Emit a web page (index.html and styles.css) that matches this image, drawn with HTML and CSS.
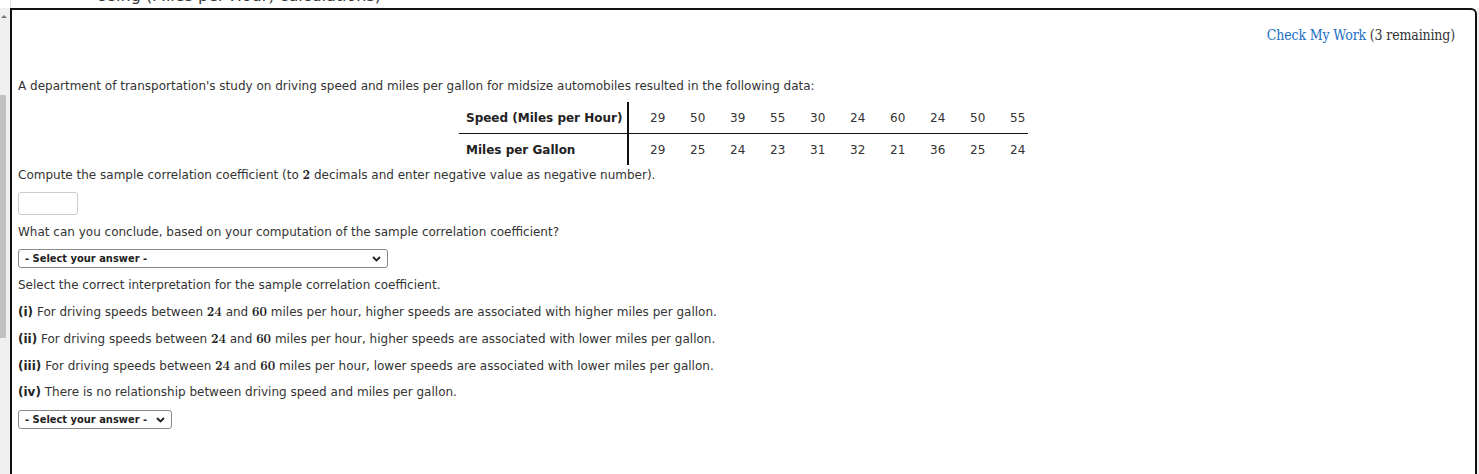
FILE: index.html
```html
<!DOCTYPE html>
<html>
<head>
<meta charset="utf-8">
<link rel="stylesheet" href="styles.css">
</head>
<body>
<div class="topstrip"><span class="cut">Using (Miles per Hour) calculations)</span></div>
<div class="frame">
  <div class="side">
    <div class="arrow"></div>
    <div class="thumb"></div>
  </div>
  <div class="panel">
    <div class="check"><a class="link">Check My Work</a> (3 remaining)</div>
    <p class="intro">A department of transportation's study on driving speed and miles per gallon for midsize automobiles resulted in the following data:</p>
    <div class="tablewrap">
      <table class="data">
        <tr class="r1">
          <th>Speed (Miles per Hour)</th>
          <td>29</td><td>50</td><td>39</td><td>55</td><td>30</td><td>24</td><td>60</td><td>24</td><td>50</td><td>55</td>
        </tr>
        <tr class="r2">
          <th>Miles per Gallon</th>
          <td>29</td><td>25</td><td>24</td><td>23</td><td>31</td><td>32</td><td>21</td><td>36</td><td>25</td><td>24</td>
        </tr>
      </table>
    </div>
    <p class="q q1">Compute the sample correlation coefficient (to <span class="m">2</span> decimals and enter negative value as negative number).</p>
    <div class="inp"></div>
    <p class="q q2">What can you conclude, based on your computation of the sample correlation coefficient?</p>
    <div class="sel wide"><span>- Select your answer -</span><svg class="chev" width="9" height="6" viewBox="0 0 9 6"><path d="M1 1 L4.5 4.5 L8 1" fill="none" stroke="#222" stroke-width="1.8"/></svg></div>
    <p class="q q3">Select the correct interpretation for the sample correlation coefficient.</p>
    <p class="opt o1"><b>(i)</b> For driving speeds between <span class="m">24</span> and <span class="m">60</span> miles per hour, higher speeds are associated with higher miles per gallon.</p>
    <p class="opt"><b>(ii)</b> For driving speeds between <span class="m">24</span> and <span class="m">60</span> miles per hour, higher speeds are associated with lower miles per gallon.</p>
    <p class="opt"><b>(iii)</b> For driving speeds between <span class="m">24</span> and <span class="m">60</span> miles per hour, lower speeds are associated with lower miles per gallon.</p>
    <p class="opt"><b>(iv)</b> There is no relationship between driving speed and miles per gallon.</p>
    <div class="sel narrow"><span>- Select your answer -</span><svg class="chev" width="9" height="6" viewBox="0 0 9 6"><path d="M1 1 L4.5 4.5 L8 1" fill="none" stroke="#222" stroke-width="1.8"/></svg></div>
  </div>
  <div class="rside"></div>
</div>
</body>
</html>
```

FILE: styles.css
```css
html, body {
  margin: 0;
  padding: 0;
  background: #fff;
  height: 474px;
  overflow: hidden;
}
body {
  font-family: "DejaVu Sans", Verdana, sans-serif;
  font-size: 12px;
  color: #333;
}
.topstrip {
  height: 8px;
  overflow: hidden;
  position: relative;
  margin-left: 10px;
  border-left: 1px solid #e0e0e0;
}
.cut {
  position: absolute;
  left: 85px;
  top: -14px;
  font-size: 16px;
  white-space: nowrap;
  color: #333;
}
.frame {
  display: flex;
  height: 466px;
}
.side {
  width: 10px;
  background: #f0f0f0;
  display: flex;
  flex-direction: column;
  align-items: flex-start;
}
.arrow {
  width: 0;
  height: 0;
  margin: 7px 0 0 1px;
  border-left: 3px solid transparent;
  border-right: 3px solid transparent;
  border-bottom: 3px solid #777;
}
.thumb {
  margin-top: 77px;
  width: 6px;
  height: 243px;
  background: #c1c1c1;
}
.panel {
  flex: 1;
  border: 2px solid #111;
  border-bottom: none;
  border-top-right-radius: 6px;
  padding: 0 0 0 6px;
  position: relative;
}
.rside {
  width: 2px;
  background: #f0f0f0;
}
.check {
  text-align: right;
  font-family: "DejaVu Serif", Georgia, serif;
  font-stretch: condensed;
  font-size: 14px;
  letter-spacing: -0.15px;
  color: #333;
  padding: 15px 20px 0 0;
  height: 20px;
  line-height: 20px;
}
.link {
  color: #1b6ec2;
}
p {
  margin: 0;
  line-height: 16px;
}
.intro {
  margin-top: 33px;
}
.tablewrap {
  display: flex;
  justify-content: flex-start;
  padding-left: 441px;
  margin-top: 8px;
}
.data {
  border-collapse: collapse;
}
.data th {
  font-weight: bold;
  text-align: left;
  padding: 0 0 0 7px;
  border-right: 2px solid #111;
  width: 169px;
  box-sizing: border-box;
  white-space: nowrap;
  color: #222;
}
.data td {
  width: 40px;
  padding: 0;
  text-align: left;
}
.data td:first-of-type {
  padding-left: 21px;
}
.data td:last-child {
  width: 18px;
}
.r1 th, .r1 td {
  height: 31px;
  border-bottom: 1px solid #111;
}
.r2 th, .r2 td {
  height: 31px;
}
.m {
  font-family: "Latin Modern Roman", "DejaVu Serif", serif;
  font-weight: bold;
  font-size: 13px;
  color: #222;
}
.q1 {
  margin-top: 1px;
}
.inp {
  width: 58px;
  height: 21px;
  border: 1px solid #ccc;
  border-radius: 3px;
  margin-top: 9px;
  background: #fff;
}
.q2 {
  margin-top: 9px;
}
.sel {
  box-sizing: border-box;
  height: 19px;
  border: 1px solid #888;
  border-radius: 3px;
  display: flex;
  align-items: center;
  justify-content: space-between;
  padding: 0 6px 0 6px;
  font-size: 11px;
  font-weight: bold;
  font-stretch: condensed;
  color: #222;
}
.sel.wide { width: 370px; margin-top: 9px; }
.sel.narrow { width: 154px; margin-top: 10px; }
.q3 {
  margin-top: 9px;
}
.opt {
  margin-top: 10px;
}
.opt b {
  color: #222;
}
```
